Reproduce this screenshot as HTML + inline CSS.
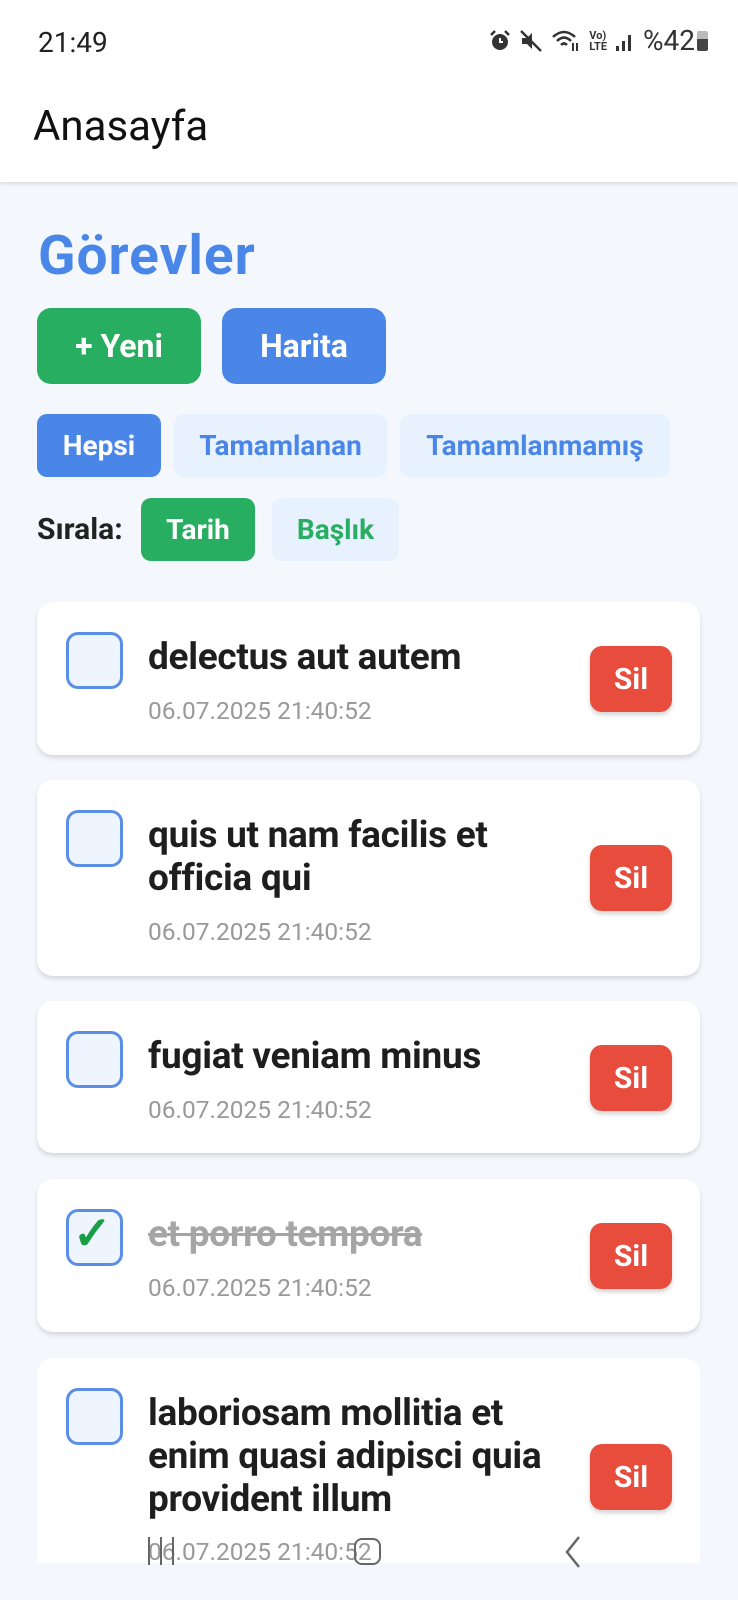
<!DOCTYPE html>
<html><head><meta charset="utf-8"><style>
*{box-sizing:border-box;margin:0;padding:0}
html,body{width:738px;height:1600px;background:#f4f8fc;overflow:hidden}
body{font-family:"Roboto","Liberation Sans",sans-serif;position:relative}
.hdr{position:absolute;left:0;top:0;width:738px;height:182px;background:#fff;box-shadow:0 2px 4px rgba(0,0,0,.12)}
.time{position:absolute;left:38px;top:26px;font-size:28px;color:#222}
.stat{position:absolute;right:30px;top:24px;font-size:28px;color:#333;display:flex;align-items:center;gap:8px}
.title{position:absolute;left:33px;top:102px;font-size:42px;color:#111}
.gor{position:absolute;left:38px;top:224px;font-size:55px;font-weight:bold;color:#4a86e8;letter-spacing:1px}
.btn{position:absolute;color:#fff;font-weight:bold;display:flex;align-items:center;justify-content:center;border-radius:14px}
.card{position:absolute;left:37px;width:663px;background:#fff;border-radius:16px;box-shadow:0 3px 5px rgba(0,0,0,.13)}
.cb{position:absolute;left:29px;top:30px;width:57px;height:57px;border:3.5px solid #5b8fe6;border-radius:12px;background:#eef5ff}
.tt{position:absolute;left:111px;font-size:37px;font-weight:bold;color:#1e1e1e;line-height:43px;letter-spacing:-.3px;white-space:nowrap}
.dt{position:absolute;left:111px;font-size:24.5px;color:#999}
.sil{position:absolute;right:28px;width:82px;height:66px;background:#e74c3c;border-radius:12px;color:#fff;font-weight:bold;font-size:30px;display:flex;align-items:center;justify-content:center;box-shadow:0 3px 5px rgba(0,0,0,.18)}
</style></head><body>
<div class="hdr">
<div class="time">21:49</div>
<div class="stat">
<svg width="22" height="22" viewBox="0 0 22 22"><circle cx="11" cy="12" r="8" fill="#333"/><path d="M2 5 L6 1 M20 5 L16 1" stroke="#333" stroke-width="2.5"/><path d="M11 8 V12 H14" stroke="#fff" stroke-width="2" fill="none"/></svg>
<svg width="24" height="24" viewBox="0 0 24 24"><path d="M3 9 H8 L13 4 V20 L8 15 H3 Z" fill="#333"/><path d="M2 2 L22 22" stroke="#333" stroke-width="2.5"/></svg>
<svg width="30" height="24" viewBox="0 0 30 24"><path d="M2 8 Q13 -2 24 8 M6 12 Q13 5 20 12 M10 16 Q13 13 16 16" stroke="#333" stroke-width="2.5" fill="none"/><path d="M22 14 V22 M26 22 V14" stroke="#333" stroke-width="2"/></svg>
<span style="font-size:11px;line-height:11px;font-weight:bold;color:#333">Vo)<br>LTE</span>
<svg width="20" height="22" viewBox="0 0 20 22"><rect x="1" y="16" width="3" height="5" fill="#333"/><rect x="7" y="11" width="3" height="10" fill="#333"/><rect x="13" y="5" width="3" height="16" fill="#333"/></svg>
<span>%42</span><span style="display:inline-block;width:11px;height:20px;background:linear-gradient(#bbb 40%,#444 40%);border-radius:2px;margin-left:-6px"></span></div>
<div class="title">Anasayfa</div>
</div>
<div class="gor">Görevler</div>
<div class="btn" style="left:37px;top:308px;width:164px;height:76px;background:#27ae60;font-size:32px">+ Yeni</div>
<div class="btn" style="left:222px;top:308px;width:164px;height:76px;background:#4a86e8;font-size:32px">Harita</div>
<div class="btn" style="left:37px;top:414px;width:124px;height:63px;background:#4a86e8;font-size:28px;border-radius:10px">Hepsi</div>
<div class="btn" style="left:174px;top:414px;width:213px;height:63px;background:#e8f2fe;color:#4a86e8;font-size:28px;border-radius:10px">Tamamlanan</div>
<div class="btn" style="left:400px;top:414px;width:270px;height:63px;background:#e8f2fe;color:#4a86e8;font-size:28px;border-radius:10px">Tamamlanmamış</div>
<div style="position:absolute;left:37px;top:512px;font-size:30px;font-weight:bold;color:#222">Sırala:</div>
<div class="btn" style="left:141px;top:498px;width:114px;height:63px;background:#27ae60;font-size:28px;border-radius:10px">Tarih</div>
<div class="btn" style="left:272px;top:498px;width:127px;height:63px;background:#e8f2fe;color:#27ae60;font-size:28px;border-radius:10px">Başlık</div>

<div class="card" style="top:602px;height:153px"><div class="cb"></div><div class="tt" style="top:34px">delectus aut autem</div><div class="dt" style="top:94px">06.07.2025 21:40:52</div><div class="sil" style="top:44px">Sil</div></div>
<div class="card" style="top:780px;height:196px"><div class="cb"></div><div class="tt" style="top:34px">quis ut nam facilis et<br>officia qui</div><div class="dt" style="top:137px">06.07.2025 21:40:52</div><div class="sil" style="top:65px">Sil</div></div>
<div class="card" style="top:1001px;height:152px"><div class="cb"></div><div class="tt" style="top:34px">fugiat veniam minus</div><div class="dt" style="top:94px">06.07.2025 21:40:52</div><div class="sil" style="top:44px">Sil</div></div>
<div class="card" style="top:1179px;height:153px"><div class="cb"><span style="position:absolute;left:4px;top:-6px;font-size:46px;color:#1a9e45;font-weight:bold">✓</span></div><div class="tt" style="top:34px;color:#a5a5a5;text-decoration:line-through">et porro tempora</div><div class="dt" style="top:94px">06.07.2025 21:40:52</div><div class="sil" style="top:44px">Sil</div></div>
<div class="card" style="top:1358px;height:205px;border-radius:16px 16px 0 0;overflow:hidden;box-shadow:none"><div class="cb"></div><div class="tt" style="top:34px">laboriosam mollitia et<br>enim quasi adipisci quia<br>provident illum</div><div class="dt" style="top:179px">06.07.2025 21:40:52</div><div class="sil" style="top:86px">Sil</div></div>
<div style="position:absolute;left:148px;top:1537px;width:26px;height:28px;border-left:2px solid #666;border-right:2px solid #666"><div style="margin-left:10px;width:2px;height:28px;background:#666"></div></div>
<div style="position:absolute;left:354px;top:1538px;width:27px;height:27px;border:2.5px solid #666;border-radius:8px"></div>
<svg style="position:absolute;left:563px;top:1535px" width="20" height="34"><path d="M16 2 L4 17 L16 32" stroke="#666" stroke-width="2.5" fill="none"/></svg>
</body></html>
